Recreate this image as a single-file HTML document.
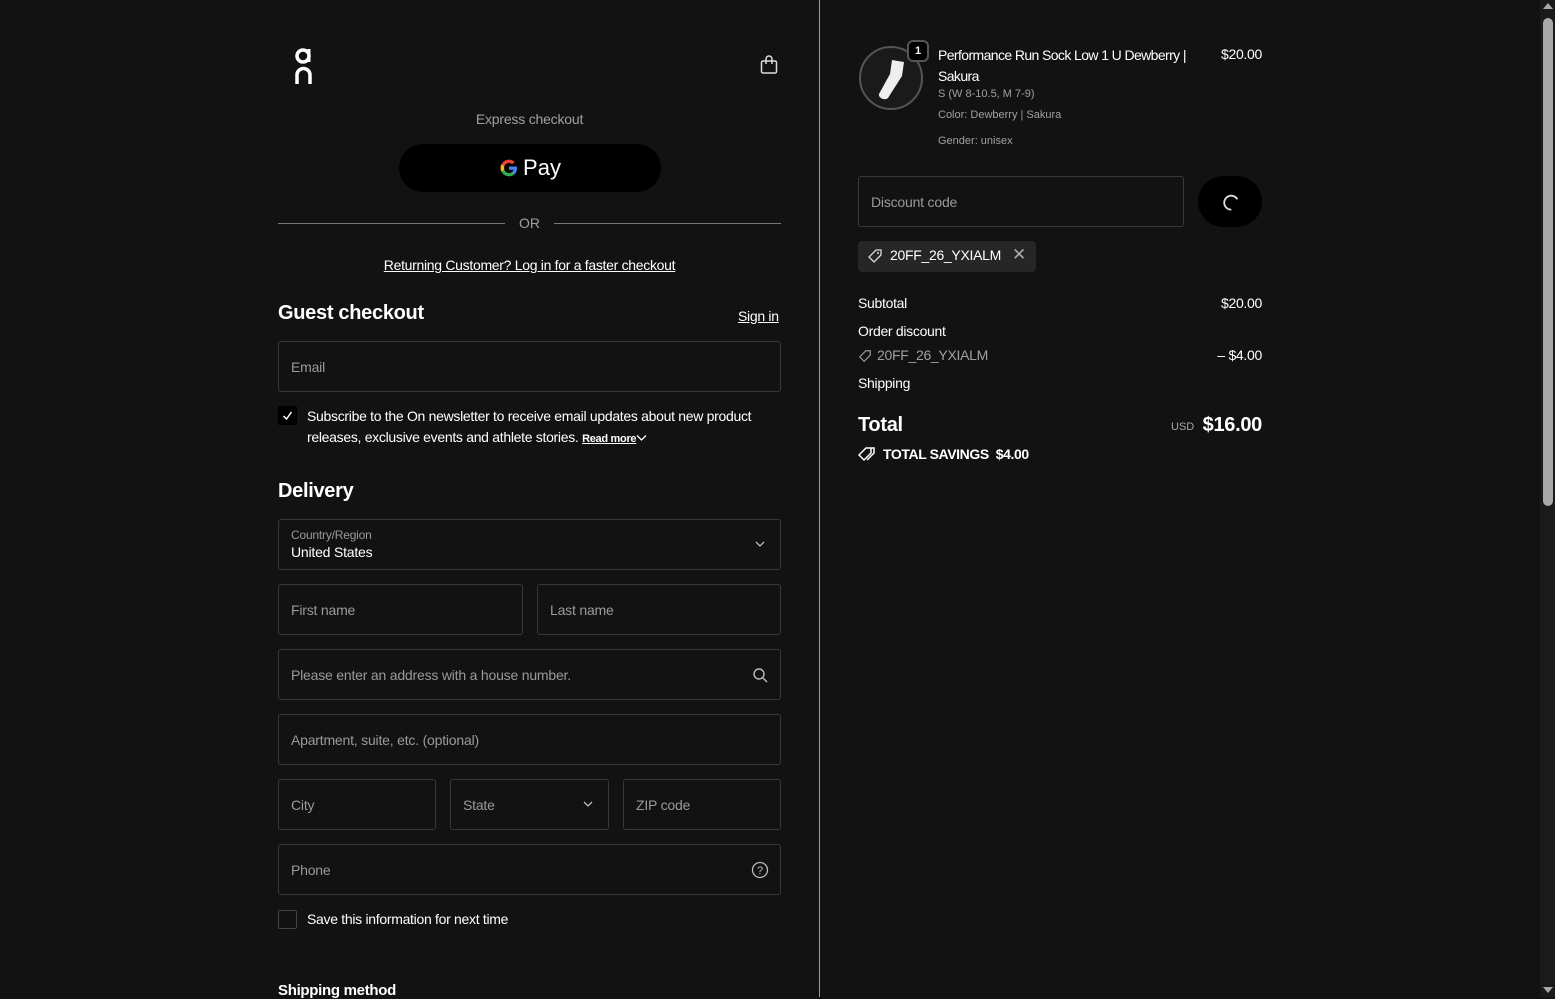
<!DOCTYPE html>
<html><head><style>
*{box-sizing:border-box;margin:0;padding:0}
body{width:1555px;height:997px;overflow:hidden;background:#121212;font-family:"Liberation Sans",sans-serif;color:#fff;position:relative}
.a{position:absolute}
.in{position:absolute;border:1px solid #383838;border-radius:3px;height:51px;color:#9a9a9a;font-size:14px;padding:0 12px;display:flex;align-items:center;letter-spacing:-0.2px}
.t{font-size:14px;color:#fff;letter-spacing:-0.3px}
.g{color:#a0a0a0}
.r{position:absolute;right:293px;font-size:14px;letter-spacing:-0.3px}
</style></head><body>
<div class="a" style="left:819px;top:0;width:1px;height:997px;background:#9a9a9a"></div>
<div class="a" style="left:1540px;top:0;width:15px;height:997px;background:#1a1a1a"></div>
<div class="a" style="left:1543px;top:18px;width:10px;height:488px;background:#a8a8a8;border-radius:5px"></div>
<div class="a" style="left:1543px;top:3px;width:0;height:0;border-left:5px solid transparent;border-right:5px solid transparent;border-bottom:6px solid #a8a8a8"></div>
<div class="a" style="left:1543px;top:987px;width:0;height:0;border-left:5px solid transparent;border-right:5px solid transparent;border-top:6px solid #a8a8a8"></div>

<svg class="a" style="left:294px;top:46px" width="20" height="38" viewBox="0 0 20 38"><circle cx="9" cy="10" r="6" fill="none" stroke="#fff" stroke-width="3.5"/><path d="M15 3v13" stroke="#fff" stroke-width="3"/><path d="M3 38V29a6.5 6.5 0 0 1 13 0v9" fill="none" stroke="#fff" stroke-width="3.5"/></svg>
<svg class="a" style="left:760px;top:55px" width="18" height="20" viewBox="0 0 18 20"><rect x="1.5" y="6" width="15" height="12" rx="1.5" fill="none" stroke="#ddd" stroke-width="1.5"/><path d="M6 9V4a3 3 0 0 1 6 0v5" fill="none" stroke="#ddd" stroke-width="1.5"/></svg>

<div class="a g" style="left:278px;width:503px;top:111px;text-align:center;font-size:14px;letter-spacing:-0.2px">Express checkout</div>
<div class="a" style="left:399px;top:144px;width:262px;height:48px;background:#000;border-radius:24px;display:flex;align-items:center;justify-content:center;gap:4px">
<svg width="20" height="20" viewBox="0 0 20 20"><path d="M18 10.2c0-.6-.1-1.2-.2-1.7H10v3.3h4.5a3.9 3.9 0 0 1-1.7 2.5v2h2.7c1.6-1.5 2.5-3.6 2.5-6.1z" fill="#4285F4"/><path d="M10 18.3c2.3 0 4.1-.8 5.5-2.1l-2.7-2c-.7.5-1.7.8-2.8.8-2.2 0-4-1.5-4.7-3.4H2.5v2.1A8.3 8.3 0 0 0 10 18.3z" fill="#34A853"/><path d="M5.3 11.6a5 5 0 0 1 0-3.2V6.3H2.5a8.3 8.3 0 0 0 0 7.4z" fill="#FBBC05"/><path d="M10 5c1.2 0 2.3.4 3.2 1.3l2.4-2.4A8.3 8.3 0 0 0 2.5 6.3l2.8 2.1C6 6.5 7.8 5 10 5z" fill="#EA4335"/></svg>
<span style="font-size:22px">Pay</span></div>

<div class="a" style="left:278px;top:223px;width:227px;height:1px;background:#777"></div>
<div class="a" style="left:554px;top:223px;width:227px;height:1px;background:#777"></div>
<div class="a g" style="left:505px;width:49px;top:215px;text-align:center;font-size:14px">OR</div>
<div class="a t" style="left:278px;width:503px;top:257px;text-align:center;text-decoration:underline">Returning Customer? Log in for a faster checkout</div>

<div class="a" style="left:278px;top:302px;font-size:20px;font-weight:bold;letter-spacing:-0.3px">Guest checkout</div>
<div class="a t" style="left:738px;top:308px;text-decoration:underline">Sign in</div>
<div class="in" style="left:278px;top:341px;width:503px">Email</div>

<div class="a" style="left:278px;top:406px;width:19px;height:19px;background:#000;border-radius:2px"></div>
<svg class="a" style="left:282px;top:410px" width="11" height="11" viewBox="0 0 11 11"><path d="M1.5 6l3 3 5-7" fill="none" stroke="#fff" stroke-width="1.5"/></svg>
<div class="a t" style="left:307px;top:406px;width:480px;line-height:21px">Subscribe to the On newsletter to receive email updates about new product releases, exclusive events and athlete stories. <b style="font-size:11px;text-decoration:underline">Read more</b><svg width="11" height="8" viewBox="0 0 11 8"><path d="M1 1.5l4.5 4.5 4.5-4.5" fill="none" stroke="#fff" stroke-width="1.3"/></svg></div>

<div class="a" style="left:278px;top:480px;font-size:20px;font-weight:bold;letter-spacing:-0.3px">Delivery</div>
<div class="in" style="left:278px;top:519px;width:503px;display:block;padding-top:8px"><div style="font-size:12px;color:#999">Country/Region</div><div style="color:#fff;font-size:14px;margin-top:2px">United States</div></div>
<svg class="a" style="left:755px;top:541px" width="10" height="7" viewBox="0 0 10 7"><path d="M1 1l4 4 4-4" fill="none" stroke="#bbb" stroke-width="1.3"/></svg>

<div class="in" style="left:278px;top:584px;width:245px">First name</div>
<div class="in" style="left:537px;top:584px;width:244px">Last name</div>
<div class="in" style="left:278px;top:649px;width:503px">Please enter an address with a house number.</div>
<svg class="a" style="left:752px;top:667px" width="16" height="16" viewBox="0 0 16 16"><circle cx="7" cy="7" r="5" fill="none" stroke="#bbb" stroke-width="1.4"/><path d="M11 11l4 4" stroke="#bbb" stroke-width="1.4"/></svg>
<div class="in" style="left:278px;top:714px;width:503px">Apartment, suite, etc. (optional)</div>
<div class="in" style="left:278px;top:779px;width:158px">City</div>
<div class="in" style="left:450px;top:779px;width:159px">State</div>
<svg class="a" style="left:583px;top:801px" width="10" height="7" viewBox="0 0 10 7"><path d="M1 1l4 4 4-4" fill="none" stroke="#bbb" stroke-width="1.3"/></svg>
<div class="in" style="left:623px;top:779px;width:158px">ZIP code</div>
<div class="in" style="left:278px;top:844px;width:503px">Phone</div>
<svg class="a" style="left:751px;top:861px" width="18" height="18" viewBox="0 0 18 18"><circle cx="9" cy="9" r="7.5" fill="none" stroke="#bbb" stroke-width="1.3"/><text x="9" y="13" font-size="11" text-anchor="middle" fill="#bbb" font-family="Liberation Sans">?</text></svg>
<div class="a" style="left:278px;top:910px;width:19px;height:19px;border:1px solid #444;border-radius:2px"></div>
<div class="a t" style="left:307px;top:911px">Save this information for next time</div>
<div class="a" style="left:278px;top:982px;font-size:15px;font-weight:bold;letter-spacing:-0.3px">Shipping method</div>

<!-- right -->
<div class="a" style="left:859px;top:46px;width:64px;height:64px;border-radius:50%;border:2px solid #555;background:#1a1a1a"></div>
<svg class="a" style="left:872px;top:56px" width="40" height="46" viewBox="0 0 40 46"><path d="M20 4l12 2-2 14-14 22c-3 3-10 0-9-4l11-20z" fill="#eee"/></svg>
<div class="a" style="left:907px;top:40px;width:22px;height:22px;border-radius:6px;background:#000;border:2px solid #555;font-size:11px;font-weight:bold;text-align:center;line-height:18px">1</div>
<div class="a t" style="left:938px;top:45px;width:272px;line-height:21px;letter-spacing:-0.6px">Performance Run Sock Low 1 U Dewberry | Sakura</div>
<div class="r" style="top:46px">$20.00</div>
<div class="a g" style="left:938px;top:88px;font-size:11px">S (W 8-10.5, M 7-9)</div>
<div class="a g" style="left:938px;top:109px;font-size:11px">Color: Dewberry | Sakura</div>
<div class="a g" style="left:938px;top:135px;font-size:11px">Gender: unisex</div>

<div class="in" style="left:858px;top:176px;width:326px">Discount code</div>
<div class="a" style="left:1198px;top:176px;width:64px;height:51px;background:#000;border-radius:26px"></div>
<svg class="a" style="left:1220px;top:192px" width="20" height="20" viewBox="0 0 20 20"><path d="M4 15A7 7 0 1 1 16 15" fill="none" stroke="#ddd" stroke-width="1.8" transform="rotate(-60 10 10)"/></svg>

<div class="a" style="left:858px;top:241px;width:178px;height:31px;background:#262626;border-radius:4px"></div>
<svg class="a" style="left:867px;top:248px" width="16" height="16" viewBox="0 0 16 16"><path d="M9 2h5v5l-7 7-5-5z" fill="none" stroke="#ddd" stroke-width="1.3"/><circle cx="11" cy="5" r="1" fill="#ddd"/></svg>
<div class="a t" style="left:890px;top:247px">20FF_26_YXIALM</div>
<div class="a" style="left:1012px;top:245px;font-size:17px;color:#aaa">✕</div>

<div class="a t" style="left:858px;top:295px">Subtotal</div><div class="r" style="top:295px">$20.00</div>
<div class="a t" style="left:858px;top:323px">Order discount</div>
<svg class="a" style="left:858px;top:349px" width="14" height="14" viewBox="0 0 16 16"><path d="M9 2h5v5l-7 7-5-5z" fill="none" stroke="#999" stroke-width="1.4"/></svg>
<div class="a g" style="left:877px;top:347px;font-size:14px;letter-spacing:-0.3px">20FF_26_YXIALM</div>
<div class="r" style="top:347px">– $4.00</div>
<div class="a t" style="left:858px;top:375px">Shipping</div>
<div class="a" style="left:858px;top:414px;font-size:20px;font-weight:bold;letter-spacing:-0.3px">Total</div>
<div class="a" style="left:1171px;top:421px;font-size:11px;color:#aaa">USD</div>
<div class="r" style="top:414px;font-size:20px;font-weight:bold">$16.00</div>
<svg class="a" style="left:858px;top:446px" width="18" height="16" viewBox="0 0 18 16"><path d="M8 2h5v5l-7 7-5-5z M11 2h5v5l-7 7" fill="none" stroke="#fff" stroke-width="1.5"/></svg>
<div class="a" style="left:883px;top:446px;font-size:14px;font-weight:bold;letter-spacing:-0.4px">TOTAL SAVINGS &nbsp;$4.00</div>
</body></html>
